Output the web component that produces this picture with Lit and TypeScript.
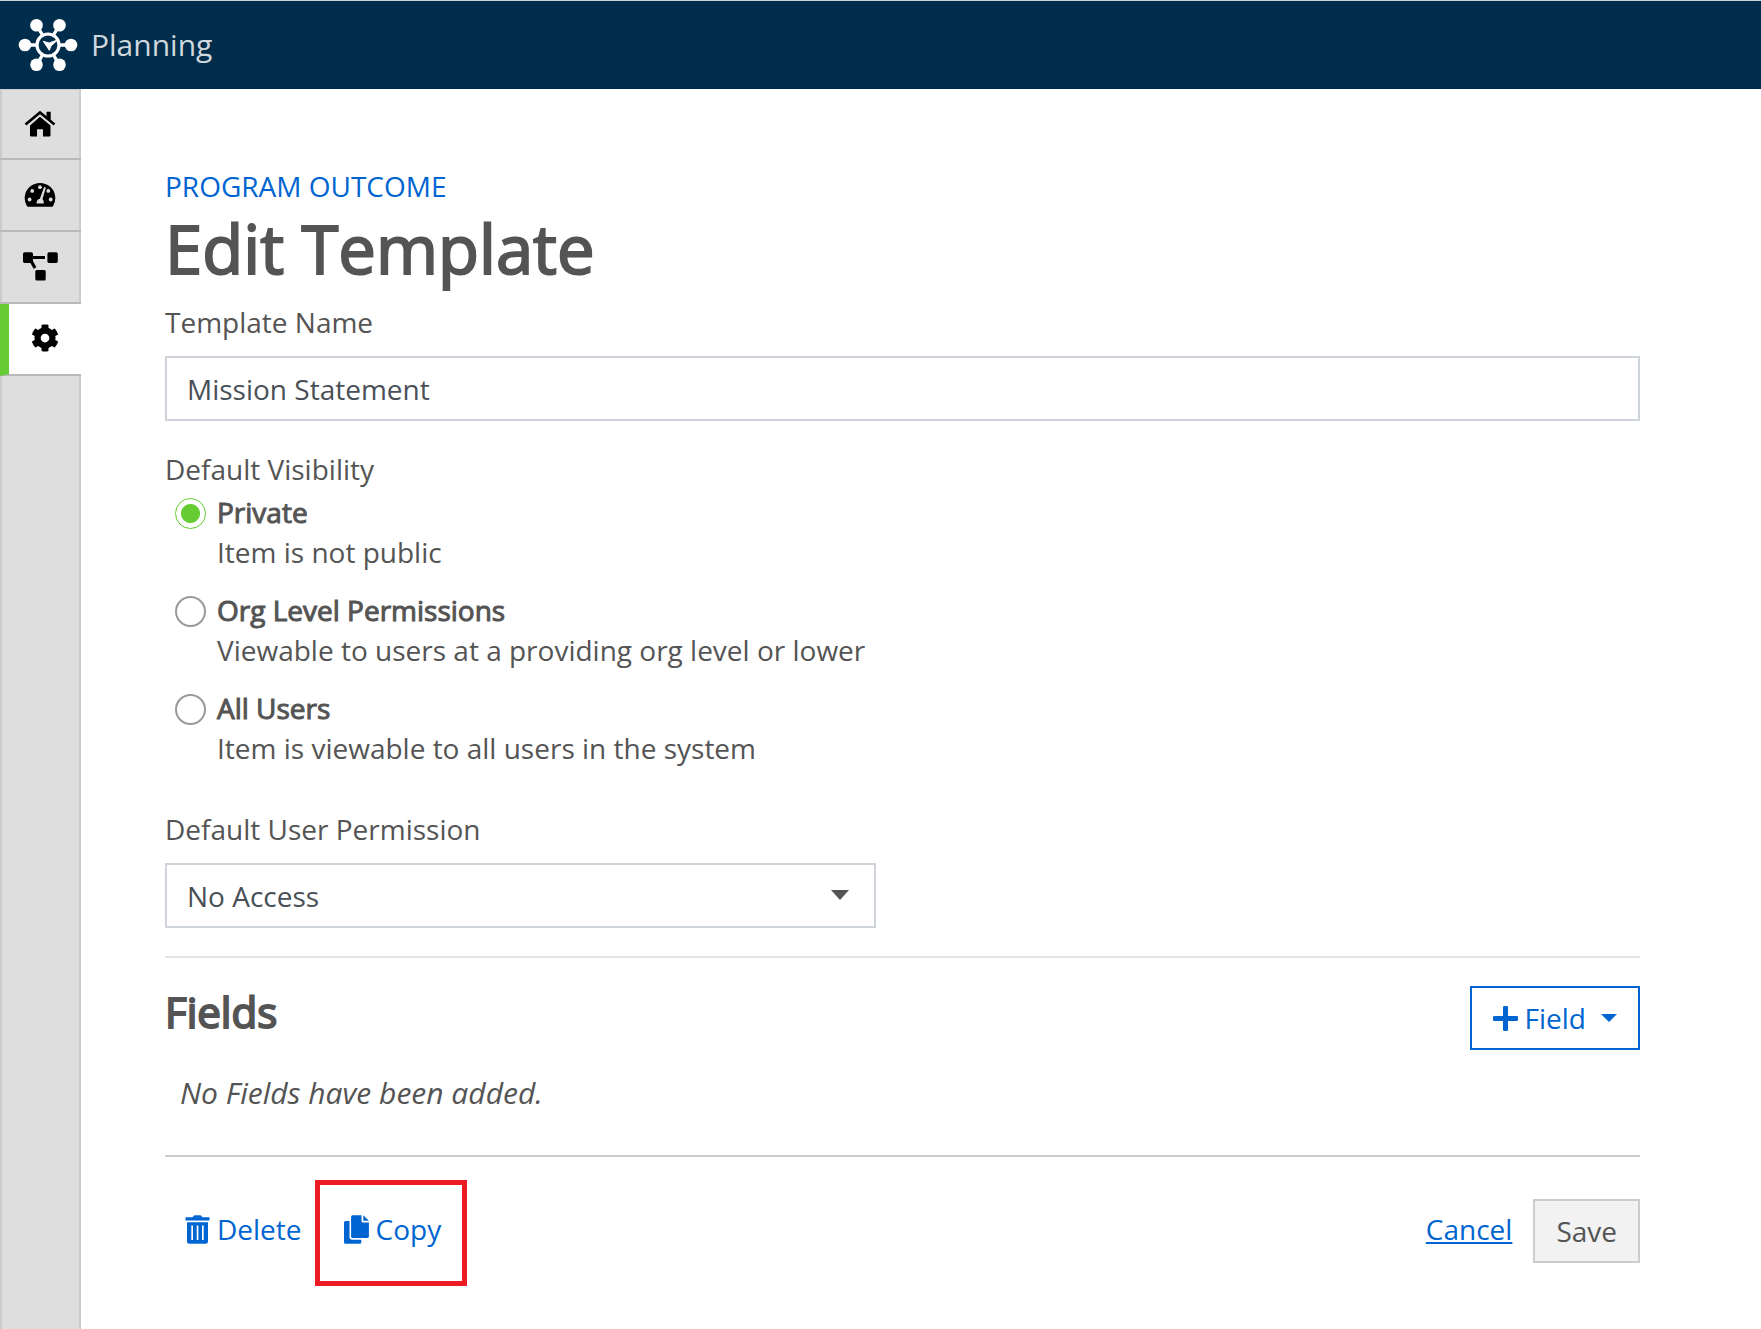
import { LitElement, html, css, svg } from "lit";
import { customElement, state } from "lit/decorators.js";
import { classMap } from "lit/directives/class-map.js";

const logo = svg`
  <svg class="logo" viewBox="0 0 60 54" width="60" height="54" aria-hidden="true">
    <g stroke="#fff" stroke-width="3.4">
      <path d="M6 27H18M42 27H54M18.500 7 24.500 17M41.500 7 35.500 17M18.500 47 24.500 37M41.500 47 35.500 37" />
    </g>
    <g fill="#fff">
      <circle cx="7" cy="27" r="6.300" /><circle cx="53" cy="27" r="6.300" />
      <circle cx="18.500" cy="7.200" r="6.300" /><circle cx="41.500" cy="7.200" r="6.300" />
      <circle cx="18.500" cy="46.800" r="6.300" /><circle cx="41.500" cy="46.800" r="6.300" />
    </g>
    <circle cx="30" cy="27" r="11" fill="#002d4b" stroke="#fff" stroke-width="3.200" />
    <path d="M25.300 23.300 31 25 39.500 22 33 28 31.300 32.300Z" fill="#fff" stroke="#fff" stroke-width="1" />
  </svg>`;

const homeIcon = svg`
  <svg class="icon" viewBox="0 0 36 32" width="36" height="32" aria-hidden="true">
    <path d="M3.500 16.500 18 4.500 32.500 16.500" fill="none" stroke="#000" stroke-width="2.600" />
    <path d="M24.500 3.700H28.700V14L24.500 10.500Z" />
    <path d="M18 8.800 28.500 17.500V27.200Q28.500 28.500 27.200 28.500H21V21.300H15V28.500H9.300Q8 28.500 8 27.200V17.500Z" />
  </svg>`;

const gaugeIcon = svg`
  <svg class="icon" viewBox="0 0 36 32" width="36" height="32" aria-hidden="true">
    <path d="M5 28.300A15.300 15.300 0 1 1 31 28.300Q30.700 28.700 30 28.700H6Q5.300 28.700 5 28.300Z" />
    <g fill="#dedede">
      <circle cx="7.600" cy="21.500" r="1.900" /><circle cx="10.200" cy="12.900" r="1.900" />
      <circle cx="18" cy="9.200" r="1.900" /><circle cx="26.300" cy="12.900" r="1.900" />
      <circle cx="28.700" cy="21.500" r="1.900" />
      <path d="M22.100 8.900 23.900 9.500 20.500 21Q21.900 22.100 21.900 25.500H14.500Q14.500 21.500 17.900 20.800Z" />
    </g>
  </svg>`;

const nodesIcon = svg`
  <svg class="icon" viewBox="0 0 36 32" width="36" height="32" aria-hidden="true">
    <path d="M8 7.500H23M8 9 13 18" fill="none" stroke="#000" stroke-width="3.200" />
    <rect x="1" y="2.300" width="10" height="10.600" rx="1.600" />
    <rect x="25.400" y="2.300" width="10.400" height="10.600" rx="1.600" />
    <rect x="13.300" y="20" width="10.400" height="10.600" rx="1.600" />
  </svg>`;

const gearIcon = svg`
  <svg class="icon" viewBox="0 0 512 512" width="28" height="28" aria-hidden="true">
    <path d="M487.400 315.700l-42.600-24.600c4.300-23.200 4.300-47 0-70.200l42.600-24.600c4.900-2.800 7.100-8.600 5.500-14-11.100-35.600-30-67.800-54.700-94.600-3.800-4.100-10-5.100-14.800-2.300L380.800 110c-17.900-15.400-38.500-27.300-60.800-35.100V25.800c0-5.600-3.900-10.500-9.400-11.700-36.700-8.200-74.300-7.800-109.200 0-5.500 1.200-9.400 6.100-9.400 11.700V75c-22.200 7.900-42.800 19.800-60.800 35.100L88.700 85.500c-4.900-2.800-11-1.900-14.800 2.300-24.700 26.700-43.600 58.900-54.700 94.600-1.700 5.400.6 11.200 5.500 14L67.300 221c-4.300 23.200-4.300 47 0 70.200l-42.600 24.600c-4.900 2.800-7.100 8.600-5.500 14 11.100 35.600 30 67.800 54.700 94.600 3.800 4.100 10 5.100 14.800 2.300l42.600-24.600c17.900 15.400 38.500 27.300 60.800 35.100v49.200c0 5.600 3.900 10.500 9.400 11.700 36.700 8.200 74.300 7.800 109.200 0 5.500-1.200 9.400-6.100 9.400-11.700v-49.200c22.200-7.900 42.800-19.800 60.800-35.100l42.600 24.600c4.900 2.800 11 1.900 14.800-2.300 24.700-26.700 43.600-58.900 54.700-94.600 1.500-5.500-.7-11.300-5.600-14.100zM256 336c-44.100 0-80-35.900-80-80s35.900-80 80-80 80 35.900 80 80-35.900 80-80 80z" />
  </svg>`;

const plusIcon = svg`
  <svg viewBox="0 0 25 25" width="25" height="25" fill="currentColor" aria-hidden="true">
    <rect x="0" y="10" width="25" height="5" rx="1.300" /><rect x="10" y="0" width="5" height="25" rx="1.300" />
  </svg>`;

const trashIcon = svg`
  <svg viewBox="0 0 25 29" width="25" height="29" fill="currentColor" aria-hidden="true">
    <path d="M0.500 2.200H7.500L9 .6Q9.400.2 10 .2H15Q15.600.2 16 .6L17.500 2.200H24.500V5.500H0.500Z" />
    <path fill-rule="evenodd" d="M2 7.200H23V26.200Q23 28.700 20.500 28.700H4.500Q2 28.700 2 26.200ZM6.300 10.500V25H8V10.500ZM11.700 10.500V25H13.400V10.500ZM17 10.500V25H18.700V10.500Z" />
  </svg>`;

const copyIcon = svg`
  <svg viewBox="0 0 25 29" width="25" height="29" fill="currentColor" aria-hidden="true">
    <path d="M1.500 6H5.500V22Q5.500 24.800 8.300 24.800H17.300V27.200Q17.300 28.700 15.800 28.700H1.500Q0 28.700 0 27.200V7.500Q0 6 1.500 6Z" />
    <path d="M8.600.2H17.500V6Q17.500 7.600 19.100 7.600H24.900V21.500Q24.900 23 23.400 23H8.600Q7.100 23 7.100 21.500V1.700Q7.100.2 8.600.2Z" />
    <path d="M19.300.2 24.900 5.800H19.300Z" />
  </svg>`;

const navItems = [
  { label: "Home", icon: homeIcon, active: false },
  { label: "Dashboard", icon: gaugeIcon, active: false },
  { label: "Structure", icon: nodesIcon, active: false },
  { label: "Settings", icon: gearIcon, active: true },
];

const visibilityOptions = [
  { id: "private", name: "Private", hint: "Item is not public" },
  { id: "org", name: "Org Level Permissions", hint: "Viewable to users at a providing org level or lower" },
  { id: "all", name: "All Users", hint: "Item is viewable to all users in the system" },
];

@customElement("app-root")
export class AppRoot extends LitElement {
  @state() private visibility = "private";

  static styles = css`
    :host {
      display: flex;
      flex-direction: column;
      min-height: 100vh;
      background: #fff;
      color: #545454;
      font-family: "Open Sans", "Noto Sans", sans-serif;
      font-size: 28px;
      line-height: 40px;
    }
    * { box-sizing: border-box; }
    h1, h2, p, fieldset, legend { margin: 0; padding: 0; border: 0; }
    svg { display: block; flex: none; }
    a { color: #0065d1; text-decoration: none; }
    input, select, button { font: inherit; border-radius: 0; margin: 0; }

    .topbar {
      display: flex;
      align-items: center;
      gap: 13px;
      height: 89px;
      padding-left: 18px;
      border-top: 1px solid #cdd5db;
      background: #002d4b;
      color: #d0d8de;
      font-size: 30px;
    }
    .body { display: flex; flex: 1; }

    .sidebar {
      width: 81px;
      flex: none;
      background: linear-gradient(90deg, #cbcbcb 2px, #dedede 2px, #dedede 79px, #cbcbcb 79px);
      border-top: 1px solid #cbcbcb;
    }
    .nav {
      display: flex;
      align-items: center;
      justify-content: center;
      height: 72px;
      padding: 0 2px 2px 0;
      border-bottom: 2px solid #b9b9b9;
    }
    .nav:first-child { height: 70px; padding-bottom: 0; }
    .nav.active {
      padding-right: 0;
      background: #fff;
      border-left: 9px solid #66cc33;
    }

    .content { flex: 1; min-width: 0; padding: 77px 121px 40px 84px; }
    .kicker { display: block; text-transform: uppercase; }
    h1, h2, .name { font-weight: 400; }
    h1 {
      font-size: 67px;
      line-height: 84px;
      margin-bottom: 12px;
      -webkit-text-stroke: 2px currentColor;
    }
    h2 {
      font-size: 42px;
      line-height: 52px;
      -webkit-text-stroke: 2px currentColor;
    }
    .label { display: block; }
    .box {
      display: block;
      width: 100%;
      height: 65px;
      margin-top: 14px;
      padding: 0 20px;
      border: 2px solid #ced4da;
      background: #fff;
      color: #495057;
    }
    .visibility { margin-top: 28px; }
    .options { display: flex; flex-direction: column; gap: 18px; padding: 3px 0 0 10px; }
    .option { display: flex; gap: 11px; }
    .option p, .name { display: block; }
    .name { -webkit-text-stroke: 1px currentColor; }
    .radio {
      appearance: none;
      flex: none;
      width: 31px;
      height: 31px;
      margin-top: 6px;
      border: 2px solid #999;
      border-radius: 50%;
      background: #fff;
    }
    .radio:checked {
      border: 1px solid #66cc33;
      background: radial-gradient(circle, #66cc33 9px, #fff 10px);
    }
    .permission { margin-top: 41px; width: 711px; max-width: 100%; }
    .select-wrap { display: grid; align-items: center; }
    .select-wrap > * { grid-area: 1 / 1; }
    .select { appearance: none; }
    .arrow { justify-self: end; margin: 13px 27px 0 0; pointer-events: none; }

    .fields {
      display: flex;
      justify-content: space-between;
      align-items: flex-start;
      margin-top: 28px;
      padding-top: 28px;
      border-top: 2px solid #e5e5e5;
    }
    .btn {
      display: flex;
      align-items: center;
      height: 64px;
      padding: 0 21px;
      border: 2px solid #ccc;
      background: #f2f2f2;
      color: #545454;
      cursor: pointer;
    }
    .btn.outline { gap: 7px; border-color: #0065d1; background: #fff; color: #0065d1; }
    .btn.outline .caret { margin-left: 8px; }
    .empty { margin-top: 23px; padding-left: 15px; font-size: 30px; font-style: italic; }

    .footer {
      display: flex;
      justify-content: space-between;
      align-items: center;
      margin-top: 42px;
      padding-top: 42px;
      border-top: 2px solid #ccc;
    }
    .group { display: flex; align-items: center; gap: 21px; }
    .actions { gap: 42px; padding-left: 20px; }
    .action {
      position: relative;
      display: flex;
      align-items: center;
      gap: 7px;
      margin-bottom: 4px;
    }
    .action.marked::after {
      content: "";
      position: absolute;
      inset: -29px -26px -37px -29px;
      border: 5px solid #ed1c24;
      pointer-events: none;
    }
    .cancel { text-decoration: underline; text-decoration-thickness: 2px; text-underline-offset: 2px; margin-bottom: 4px; }
  `;

  render() {
    return html`
      <header class="topbar">${logo}<span>Planning</span></header>
      <div class="body">
        <nav class="sidebar" aria-label="Main">
          ${navItems.map(
            (n) => html`<a class=${classMap({ nav: true, active: n.active })} href="#" aria-label=${n.label}>${n.icon}</a>`
          )}
        </nav>
        <main class="content">
          <a class="kicker" href="#">Program Outcome</a>
          <h1>Edit Template</h1>

          <label class="label" for="name">Template Name</label>
          <input class="box" id="name" type="text" value="Mission Statement" />

          <fieldset class="visibility">
            <legend>Default Visibility</legend>
            <div class="options">
              ${visibilityOptions.map(
                (o) => html`
                  <div class="option">
                    <input
                      class="radio"
                      type="radio"
                      name="visibility"
                      id=${o.id}
                      .checked=${this.visibility === o.id}
                      @change=${() => (this.visibility = o.id)}
                    />
                    <div>
                      <label class="name" for=${o.id}>${o.name}</label>
                      <p>${o.hint}</p>
                    </div>
                  </div>
                `
              )}
            </div>
          </fieldset>

          <div class="permission">
            <label class="label" for="permission">Default User Permission</label>
            <div class="select-wrap">
              <select class="box select" id="permission">
                <option>No Access</option>
              </select>
              <svg class="arrow" viewBox="0 0 18 10" width="18" height="10" fill="#545454" aria-hidden="true">
                <path d="M0 0H18L9 10Z" />
              </svg>
            </div>
          </div>

          <section class="fields">
            <h2>Fields</h2>
            <button class="btn outline" type="button">
              ${plusIcon}<span>Field</span>
              <svg class="caret" viewBox="0 0 16 8" width="16" height="8" fill="currentColor" aria-hidden="true">
                <path d="M0 0H16L8 8Z" />
              </svg>
            </button>
          </section>
          <p class="empty">No Fields have been added.</p>

          <footer class="footer">
            <div class="group actions">
              <a class="action" href="#">${trashIcon}<span>Delete</span></a>
              <a class="action marked" href="#">${copyIcon}<span>Copy</span></a>
            </div>
            <div class="group">
              <a class="cancel" href="#">Cancel</a>
              <button class="btn" type="button">Save</button>
            </div>
          </footer>
        </main>
      </div>
    `;
  }
}
